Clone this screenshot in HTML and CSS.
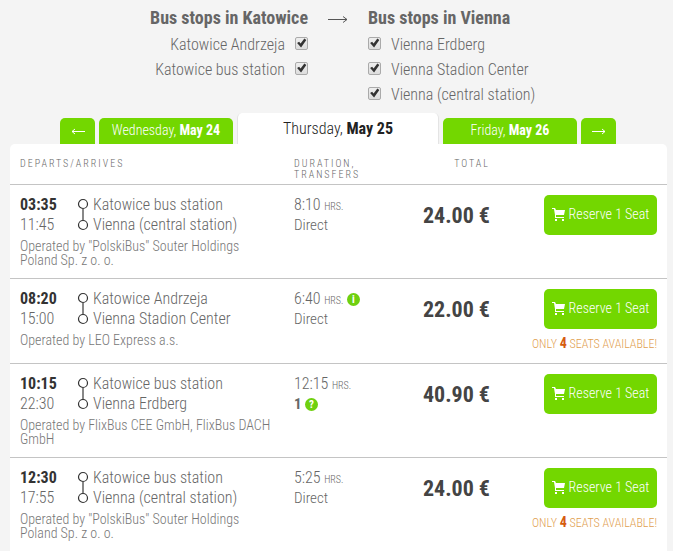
FILE: index.html
```
<!DOCTYPE html>
<html lang="en">
<head>
    <meta charset="UTF-8">
    <meta name="viewport" content="width=device-width, initial-scale=1.0">
    <title>Katowice - Vienna, May 25</title>
    <link rel="stylesheet" href="styles.css">
</head>
<body>
    <!-- shared icons -->
    <svg class="sprite" width="0" height="0" aria-hidden="true">
        <symbol id="cart" viewBox="0 0 13 13">
            <path d="M0 0h3l1 2h9l-1 5H4v2h8v1H3V7L2 1H0z"/>
            <rect x="3" y="11" width="2" height="2"/>
            <rect x="10" y="11" width="2" height="2"/>
        </symbol>
        <symbol id="route" viewBox="0 0 12 34">
            <path d="M6 11v12" stroke="#888" stroke-width="2"/>
            <circle cx="6" cy="6" r="4.5" fill="#fff" stroke="#333" stroke-width="1.2"/>
            <circle cx="6" cy="27" r="4.5" fill="#fff" stroke="#333" stroke-width="1.2"/>
        </symbol>
    </svg>

    <div class="stops">
        <div class="stops-from">
            <h2>Bus stops in Katowice</h2>
            <label>Katowice Andrzeja <input type="checkbox" checked></label>
            <label>Katowice bus station <input type="checkbox" checked></label>
        </div>
        <svg class="stops-arrow" viewBox="0 0 20 8" aria-hidden="true"><path d="M0 4.5h19M15 1.5l4 3-4 3"/></svg>
        <div class="stops-to">
            <h2>Bus stops in Vienna</h2>
            <label><input type="checkbox" checked> Vienna Erdberg</label>
            <label><input type="checkbox" checked> Vienna Stadion Center</label>
            <label><input type="checkbox" checked> Vienna (central station)</label>
        </div>
    </div>

    <div class="tabs">
        <a href="#" class="tab tab-arrow" aria-label="Previous day"><svg viewBox="0 0 14 8"><path d="M14 4.5H1M4 2L1 4.5 4 7"/></svg></a>
        <a href="#" class="tab">Wednesday, <b>May 24</b></a>
        <a href="#" class="tab tab-active">Thursday, <b>May 25</b></a>
        <a href="#" class="tab">Friday, <b>May 26</b></a>
        <a href="#" class="tab tab-arrow" aria-label="Next day"><svg viewBox="0 0 14 8"><path d="M0 4.5h13M10 2l3 2.5L10 7"/></svg></a>
    </div>

    <div class="results">
        <table>
            <thead>
                <tr>
                    <th class="col-route">Departs/Arrives</th>
                    <th class="col-duration">Duration,<br>Transfers</th>
                    <th class="col-total">Total</th>
                    <th class="col-action"></th>
                </tr>
            </thead>
            <tbody>
                <tr>
                    <td>
                        <div class="route">
                            <div class="times"><b>03:35</b><br>11:45</div>
                            <svg class="route-line"><use href="#route"/></svg>
                            <div>Katowice bus station<br>Vienna (central station)</div>
                        </div>
                        <p class="operator">Operated by "PolskiBus" Souter Holdings Poland Sp. z o. o.</p>
                    </td>
                    <td>
                        <div class="duration">8:10 <small>hrs.</small></div>
                        <div class="transfers">Direct</div>
                    </td>
                    <td class="price">24.00 €</td>
                    <td class="action">
                        <button><svg><use href="#cart"/></svg> Reserve 1 Seat</button>
                    </td>
                </tr>
                <tr>
                    <td>
                        <div class="route">
                            <div class="times"><b>08:20</b><br>15:00</div>
                            <svg class="route-line"><use href="#route"/></svg>
                            <div>Katowice Andrzeja<br>Vienna Stadion Center</div>
                        </div>
                        <p class="operator">Operated by LEO Express a.s.</p>
                    </td>
                    <td>
                        <div class="duration">6:40 <small>hrs.</small> <span class="hint">i</span></div>
                        <div class="transfers">Direct</div>
                    </td>
                    <td class="price">22.00 €</td>
                    <td class="action">
                        <button><svg><use href="#cart"/></svg> Reserve 1 Seat</button>
                        <p class="seats">Only <b>4</b> seats available!</p>
                    </td>
                </tr>
                <tr>
                    <td>
                        <div class="route">
                            <div class="times"><b>10:15</b><br>22:30</div>
                            <svg class="route-line"><use href="#route"/></svg>
                            <div>Katowice bus station<br>Vienna Erdberg</div>
                        </div>
                        <p class="operator">Operated by FlixBus CEE GmbH, FlixBus DACH GmbH</p>
                    </td>
                    <td>
                        <div class="duration">12:15 <small>hrs.</small></div>
                        <div class="transfers"><b>1</b> <span class="hint">?</span></div>
                    </td>
                    <td class="price">40.90 €</td>
                    <td class="action">
                        <button><svg><use href="#cart"/></svg> Reserve 1 Seat</button>
                    </td>
                </tr>
                <tr>
                    <td>
                        <div class="route">
                            <div class="times"><b>12:30</b><br>17:55</div>
                            <svg class="route-line"><use href="#route"/></svg>
                            <div>Katowice bus station<br>Vienna (central station)</div>
                        </div>
                        <p class="operator">Operated by "PolskiBus" Souter Holdings Poland Sp. z o. o.</p>
                    </td>
                    <td>
                        <div class="duration">5:25 <small>hrs.</small></div>
                        <div class="transfers">Direct</div>
                    </td>
                    <td class="price">24.00 €</td>
                    <td class="action">
                        <button><svg><use href="#cart"/></svg> Reserve 1 Seat</button>
                        <p class="seats">Only <b>4</b> seats available!</p>
                    </td>
                </tr>
            </tbody>
        </table>
    </div>
</body>
</html>
```
FILE: styles.css
```
* {
    box-sizing: border-box;
}
body {
    margin: 0;
    padding: 4px 6px 0 10px;
    background-color: #f4f4f4;
    color: #666;
    font-family: "Roboto Condensed", "Liberation Sans Narrow", Roboto, sans-serif;
    font-weight: 300;
    font-size: 16px;
    line-height: 20px;
}
h2, p {
    margin: 0;
}
b {
    font-weight: 700;
}
.sprite {
    display: block;
}

/* bus stops */
.stops {
    display: grid;
    grid-template-columns: 1fr 60px 1fr;
    height: 109px;
    padding-right: 1px;
}
.stops h2 {
    font-size: 18px;
    font-weight: 700;
    line-height: 28px;
}
.stops label {
    display: flex;
    align-items: center;
    gap: 10px;
    line-height: 25px;
}
.stops-from {
    text-align: right;
}
.stops-from label {
    justify-content: flex-end;
}
.stops-arrow {
    width: 20px;
    height: 8px;
    margin: 11px auto;
    fill: none;
    stroke: #555;
}
input[type="checkbox"] {
    appearance: none;
    width: 13px;
    height: 13px;
    margin: 0 0 3px;
    border: 1px solid #aaa;
    border-radius: 2px;
    background: linear-gradient(#eee, #ddd);
}
input[type="checkbox"]:checked::before {
    content: "";
    display: block;
    height: 11px;
    background-color: #333;
    clip-path: polygon(10% 50%, 28% 38%, 42% 54%, 76% 10%, 94% 22%, 46% 90%);
}

/* day tabs */
.tabs {
    display: flex;
    justify-content: center;
    align-items: flex-end;
    gap: 4px;
    padding-right: 1px;
}
.tab {
    width: 134px;
    height: 26px;
    border-radius: 5px 5px 0 0;
    background-color: #73d700;
    color: #fff;
    font-size: 14px;
    line-height: 24px;
    text-align: center;
    text-decoration: none;
}
.tab-active {
    width: 202px;
    height: 31px;
    border: 1px solid #e4e4e4;
    border-width: 0 1px;
    background-color: #fff;
    color: #222;
    font-size: 16px;
    line-height: 31px;
}
.tab-arrow {
    width: 35px;
}
.tab-arrow svg {
    width: 14px;
    height: 8px;
    fill: none;
    stroke: #fff;
}

/* connections */
.results {
    border-radius: 5px 5px 0 0;
    background-color: #fff;
}
table {
    width: 100%;
    table-layout: fixed;
    border-collapse: collapse;
}
th {
    height: 40px;
    padding: 14px 0 4px 10px;
    border-bottom: 1px solid #c4c4c4;
    font-size: 10px;
    font-weight: 300;
    line-height: 11px;
    letter-spacing: 2px;
    text-align: left;
    text-transform: uppercase;
    vertical-align: top;
}
td {
    padding: 10px 0 10px 10px;
    border-bottom: 1px solid #c4c4c4;
    vertical-align: top;
}
tr:last-child td {
    border-bottom: 0;
}
.col-route {
    width: 274px;
}
.col-duration {
    width: 100px;
}
.col-total {
    width: 106px;
    text-align: right;
}
.route {
    display: flex;
}
.times {
    width: 57px;
}
.times b {
    color: #333;
}
.route-line {
    width: 12px;
    height: 34px;
    margin: 3px 4px 0 0;
}
.operator {
    max-width: 256px;
    padding: 4px 0 1px;
    color: #777;
    font-size: 14px;
    line-height: 14px;
}
.transfers {
    font-size: 15px;
}
small {
    font-size: 10px;
    line-height: 10px;
    text-transform: uppercase;
}
.hint {
    display: inline-block;
    width: 13px;
    height: 13px;
    border-radius: 50%;
    background-color: #6fd010;
    color: #fff;
    font-size: 11px;
    font-weight: 700;
    line-height: 13px;
    text-align: center;
    vertical-align: 1px;
}
.price {
    color: #444;
    font-size: 22px;
    font-weight: 700;
    line-height: 42px;
    text-align: right;
}
.action {
    padding-right: 10px;
    text-align: right;
    white-space: nowrap;
}
button {
    display: inline-flex;
    align-items: center;
    justify-content: center;
    gap: 4px;
    width: 113px;
    height: 40px;
    padding: 0 0 2px;
    border: 0;
    border-radius: 5px;
    background-color: #73d700;
    color: #fff;
    font: inherit;
    font-size: 14px;
    vertical-align: top;
    cursor: pointer;
}
button svg {
    width: 13px;
    height: 13px;
    fill: #fff;
}
.seats {
    padding: 7px 0 2px;
    color: #dfa050;
    font-size: 12px;
    line-height: 14px;
    text-transform: uppercase;
}
.seats b {
    color: #d55c10;
    font-size: 14px;
}
```
